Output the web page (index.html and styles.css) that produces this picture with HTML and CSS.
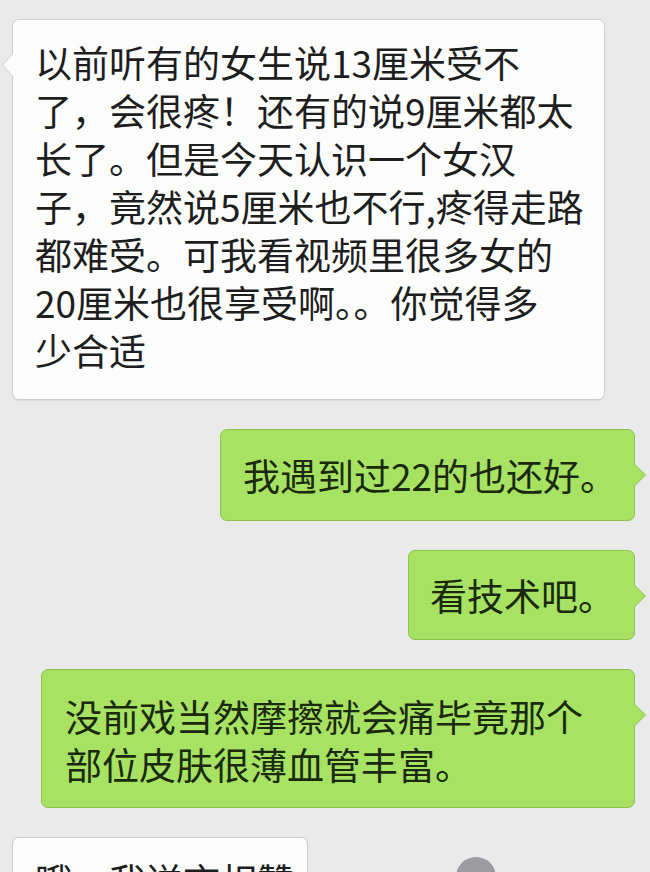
FILE: index.html
```html
<!doctype html>
<html>
<head>
<meta charset="utf-8">
<title>聊天记录</title>
<link rel="stylesheet" href="styles.css">
</head>

<body>
<div class="chat">
	<div class="row left">
		<div class="bubble white wide">以前听有的女生说13厘米受不<br>了，会很疼！还有的说9厘米都太<br>长了。但是今天认识一个女汉<br>子，竟然说5厘米也不行,疼得走路<br>都难受。可我看视频里很多女的<br>20厘米也很享受啊。。你觉得多<br>少合适</div>
	</div>
	<div class="row right">
		<div class="bubble green b2">我遇到过22的也还好。</div>
	</div>
	<div class="row right">
		<div class="bubble green b3">看技术吧。</div>
	</div>
	<div class="row right">
		<div class="bubble green wide">没前戏当然摩擦就会痛毕竟那个<br>部位皮肤很薄血管丰富。</div>
	</div>
	<div class="row left">
		<div class="bubble white b5">哦，我送言相赞</div>
		<span class="avatar"></span>
	</div>
</div>
</body>
</html>
```

FILE: styles.css
```css
* { padding: 0; margin: 0; box-sizing: border-box; }
html, body { background: #eaeaea; height: 100%; overflow: hidden; }
body { font-family: "Noto Sans CJK SC", "Noto Sans", sans-serif; }

.chat { display: flex; flex-direction: column; gap: 29px; padding: 19px 15px 0 12px; }
.row { display: flex; align-items: flex-start; }
.row.right { justify-content: flex-end; }

.bubble { position: relative; font-size: 37px; line-height: 48px; white-space: nowrap; border-radius: 7px; padding: 21px 20px 21px 22px; }
.bubble::before { content: ''; position: absolute; top: 34px; width: 0; height: 0; border-top: 11px solid transparent; border-bottom: 11px solid transparent; }

/* 对方的消息：白色气泡，尖角朝左 */
.white { background: #fdfdfd; color: #1e1e1e; border: 1px solid #cdcdcd; box-shadow: 0 1px 1px rgba(0,0,0,0.06); }
.white::before { left: -10px; border-right: 10px solid #fdfdfd; filter: drop-shadow(-1px 0 0 #cdcdcd); }
.white.wide { width: 593px; padding: 18px 20px 25px 22px; }
.b5 { width: 296px; padding: 18px 20px 22px 22px; height: 100px; overflow: hidden; }

/* 自己的消息：绿色气泡，尖角朝右 */
.green { background: #a7e263; color: #1b2a0e; border: 1px solid #8fc24f; }
.green::before { right: -11px; border-left: 11px solid #a7e263; filter: drop-shadow(1px 0 0 #8fc24f); }
.green.wide { width: 594px; padding: 22px 20px 19px 23px; }
.b2 { width: 415px; }
.b3 { width: 227px; padding: 20px 18px 20px 21px; }

.avatar { width: 40px; height: 40px; margin: 20px 0 0 148px; border-radius: 50%; background: #9c9ca0; }
```
